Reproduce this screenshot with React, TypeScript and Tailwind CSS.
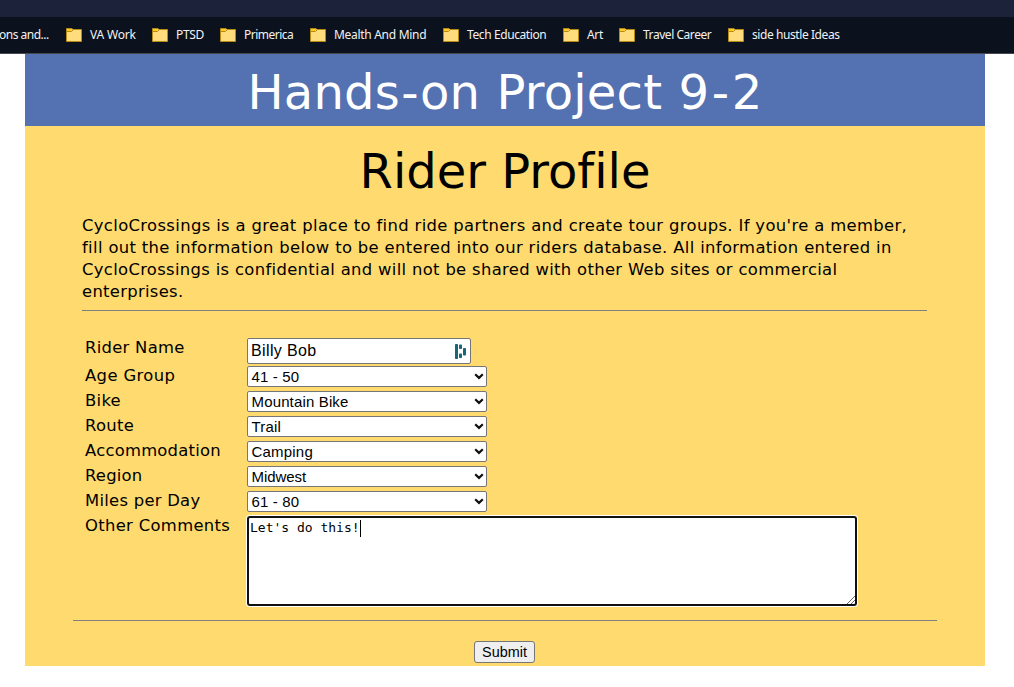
import React from "react";

const bookmarks = [
  { label: "VA Work", item: "w-[86px]", text: "tracking-[-0.2px]" },
  { label: "PTSD", item: "w-[68px]", text: "tracking-[-0.35px]" },
  { label: "Primerica", item: "w-[90px]", text: "tracking-[-0.5px]" },
  { label: "Mealth And Mind", item: "w-[133px]", text: "tracking-[-0.3px]" },
  { label: "Tech Education", item: "w-[120px]", text: "tracking-[-0.4px]" },
  { label: "Art", item: "w-[56px]", text: "tracking-[-0.3px]" },
  { label: "Travel Career", item: "w-[109px]", text: "tracking-[-0.45px]" },
  { label: "side hustle Ideas", item: "w-[130px]", text: "tracking-[-0.42px]" },
];

const selects = [
  { label: "Age Group", labelText: "tracking-[0.38px]", value: "41 - 50", text: "tracking-[0.15px]" },
  { label: "Bike", labelText: "tracking-[0.3px]", value: "Mountain Bike", text: "tracking-[0.15px]" },
  { label: "Route", labelText: "tracking-[0.33px]", value: "Trail", text: "tracking-[0.2px]" },
  { label: "Accommodation", labelText: "tracking-[0.24px]", value: "Camping", text: "tracking-[0.2px]" },
  { label: "Region", labelText: "tracking-[0.2px]", value: "Midwest", text: "tracking-[-0.05px]" },
  { label: "Miles per Day", labelText: "tracking-[0.27px]", value: "61 - 80", text: "tracking-[0.15px]" },
];

function Folder() {
  return (
    <svg className="mt-[11px] h-[14px] w-4 shrink-0" viewBox="0 0 16 14">
      <path d="M.5 .5H6l1 1h8.5v12H.5z" fill="#ffdc7c" stroke="#b68a13" strokeLinejoin="round" />
      <path d="M1 1h5v1L5 3H1z" fill="#ffc928" />
      <path d="M1 3.5h4.5L7 2" fill="none" stroke="#b68a13" />
    </svg>
  );
}

function Chevron() {
  return (
    <svg className="mr-px h-[7px] w-[10px]" viewBox="0 0 10 7">
      <path d="M1.2 1.3 5 4.9 8.8 1.3" fill="none" stroke="#101010" strokeWidth="2.2" />
    </svg>
  );
}

export default function App() {
  return (
    <div className="h-[687px] w-[1014px] overflow-hidden bg-white font-['DejaVu_Sans',sans-serif] text-black">
      <div className="h-[17px] bg-[#1c223a]" />
      <nav className="flex h-[37px] border-b border-[#46484f] bg-[#0c121d] font-['Noto_Sans',sans-serif] text-[12px] leading-[35px] text-[#f1f2f4]">
        <div className="flex w-[66px] shrink-0">
          <span className="-ml-px whitespace-nowrap tracking-[-0.5px]">ons and...</span>
        </div>
        {bookmarks.map((b) => (
          <div key={b.label} className={`flex shrink-0 gap-2 whitespace-nowrap ${b.item}`}>
            <Folder />
            <span className={b.text}>{b.label}</span>
          </div>
        ))}
      </nav>
      <main className="ml-[25px] h-[612px] w-[960px] bg-[#ffda6e]">
        <header className="h-[72px] bg-[#5471b1] text-center text-[48px] leading-[76px] text-white">
          <h1 className="tracking-[0.2px] [word-spacing:1px]">
            Hands<span className="px-[1.2px]">-</span>on Project 9<span className="px-[2.4px]">-</span>2
          </h1>
        </header>
        <h2 className="h-[89px] text-center text-[48px] leading-[90px] [font-variant-ligatures:none]">Rider Profile</h2>
        <div className="ml-[57px] h-[96px] w-[845px] border-b border-[#808080] text-[16.4px] leading-[22px]">
          <p className="whitespace-nowrap">
            <span className="block tracking-[0.36px]">CycloCrossings is a great place to find ride partners and create tour groups. If you're a member,</span>
            <span className="block tracking-[0.35px]">fill out the information below to be entered into our riders database. All information entered in</span>
            <span className="block tracking-[0.33px]">CycloCrossings is confidential and will not be shared with other Web sites or commercial</span>
            <span className="block tracking-[0.3px]">enterprises.</span>
          </p>
        </div>
        <form className="ml-[60px] pt-[27px] text-[16.4px]">
          <div className="flex h-[28px]">
            <label className="w-[162px] leading-[19px] tracking-[0.29px]">Rider Name</label>
            <div className="flex h-[26px] w-[224px] items-center justify-between rounded-[2px] border border-[#767676] bg-white pr-[3px] pl-[3px] font-['Liberation_Sans',sans-serif] text-[16px]">
              <span className="tracking-[0.37px]">Billy Bob</span>
              <svg className="h-[15px] w-[12px]" viewBox="0 0 12 15" fill="#176679">
                <rect x="0" y="0" width="3" height="15" rx=".8" />
                <rect x="4" y="0.5" width="3" height="4.5" rx=".8" />
                <rect x="4" y="9.5" width="3" height="4.5" rx=".8" />
                <rect x="8" y="4" width="3" height="7.5" rx=".8" />
              </svg>
            </div>
          </div>
          {selects.map((s) => (
            <div key={s.label} className="flex h-[25px]">
              <label className={`w-[162px] leading-[19px] ${s.labelText}`}>{s.label}</label>
              <div className="flex h-[21px] w-[240px] items-center justify-between rounded-[2px] border border-[#767676] bg-white pr-px pl-[3.5px] font-['Liberation_Sans',sans-serif] text-[15px] leading-[20px]">
                <span className={s.text}>{s.value}</span>
                <Chevron />
              </div>
            </div>
          ))}
          <div className="flex h-[104px]">
            <label className="w-[162px] leading-[19px] tracking-[0.33px]">Other Comments</label>
            <div className="flex h-[90px] w-[610px] justify-between rounded-[3px] border-2 border-[#101010] bg-white pl-px font-['DejaVu_Sans_Mono',monospace] text-[13px] leading-[18px] shadow-[0_0_0_1px_#fff]">
              <div className="mt-px flex h-[19px]">
                <span>Let's do this!</span>
                <span className="mt-px h-[17px] w-px bg-black" />
              </div>
              <svg className="h-[8px] w-[8px] self-end" viewBox="0 0 8 8" stroke="#555" strokeWidth=".9">
                <path d="M0 8 8 0M4 8 8 4" />
              </svg>
            </div>
          </div>
        </form>
        <div className="ml-[48px] flex h-[43px] w-[864px] items-end justify-center border-t border-[#808080]">
          <button className="mr-px h-[22px] w-[61px] rounded-[3px] border border-[#767676] bg-[#efefef] font-['Liberation_Sans',sans-serif] text-[14.4px] leading-[20px]">Submit</button>
        </div>
      </main>
    </div>
  );
}
